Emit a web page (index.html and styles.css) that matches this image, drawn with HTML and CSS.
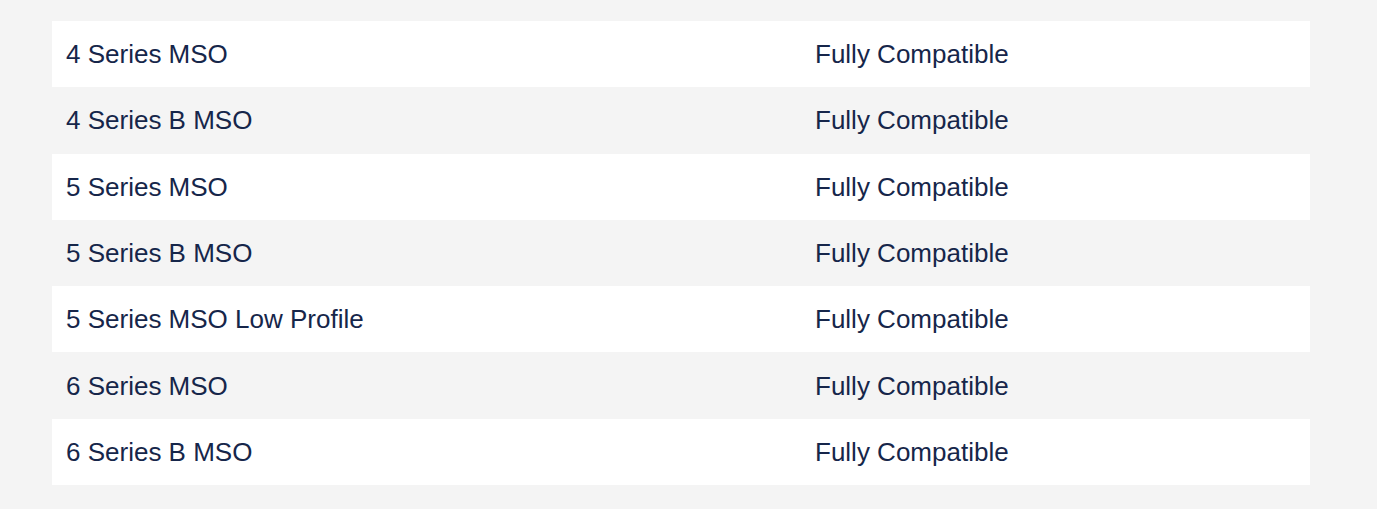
FILE: index.html
```html
<!DOCTYPE html>
<html>
<head>
<meta charset="utf-8">
<link rel="stylesheet" href="styles.css">
</head>
<body>
<div class="table">
  <div class="row"><div class="cell name">4 Series MSO</div><div class="cell status">Fully Compatible</div></div>
  <div class="row"><div class="cell name">4 Series B MSO</div><div class="cell status">Fully Compatible</div></div>
  <div class="row"><div class="cell name">5 Series MSO</div><div class="cell status">Fully Compatible</div></div>
  <div class="row"><div class="cell name">5 Series B MSO</div><div class="cell status">Fully Compatible</div></div>
  <div class="row"><div class="cell name">5 Series MSO Low Profile</div><div class="cell status">Fully Compatible</div></div>
  <div class="row"><div class="cell name">6 Series MSO</div><div class="cell status">Fully Compatible</div></div>
  <div class="row"><div class="cell name">6 Series B MSO</div><div class="cell status">Fully Compatible</div></div>
</div>
</body>
</html>
```
FILE: styles.css
```css
html, body {
  margin: 0;
  padding: 0;
  background: #f4f4f4;
}
body {
  padding: 21px 67px 0 52px;
  font-family: "Liberation Sans", Arial, sans-serif;
  font-size: 26px;
  color: #16264a;
}
.table {
  display: grid;
  grid-auto-rows: 66.3px;
  width: 1258px;
}
.row {
  display: grid;
  grid-template-columns: 749px 1fr;
  align-items: center;
  background: #ffffff;
}
.row:nth-child(even) {
  background: #f4f4f4;
}
.cell {
  padding: 0 14px;
  line-height: 1;
  white-space: nowrap;
}
```
